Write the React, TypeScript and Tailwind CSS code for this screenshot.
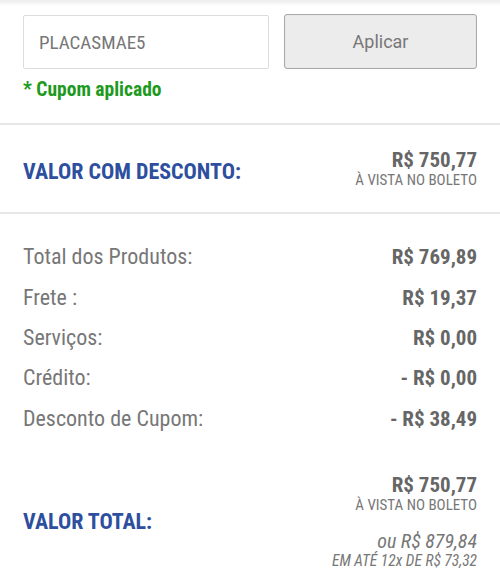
const rows = [
  { label: 'Total dos Produtos:', value: 'R$ 769,89' },
  { label: 'Frete :', value: 'R$ 19,37' },
  { label: 'Serviços:', value: 'R$ 0,00' },
  { label: 'Crédito:', value: '- R$ 0,00' },
  { label: 'Desconto de Cupom:', value: '- R$ 38,49' },
];

export default function App() {
  return (
    <div className="w-[500px] min-h-[586px] bg-white font-['Roboto',sans-serif] font-stretch-[75%]">
      {/* top shadow edge */}
      <div className="h-[6px] bg-gradient-to-b from-[#ececec] to-white" />

      {/* Coupon */}
      <div className="px-[23px] pt-[9px] pb-[19px]">
        <div className="flex gap-[15px]">
          <input
            className="w-[246px] h-[54px] border border-[#dcdcdc] rounded-[2px] px-[15px] text-[19px] text-[#777] outline-none font-stretch-[75%]"
            defaultValue="PLACASMAE5"
          />
          <button className="flex-1 h-[55px] -mt-px border-[1.5px] border-[#a8a8a8] rounded-[3px] bg-[#ececec] text-[18px] text-[#777] font-stretch-[100%] shadow-[inset_0_0_1px_#ccc]">
            Aplicar
          </button>
        </div>
        <p className="mt-[6px] text-[19.5px] font-bold text-[#1d9a1d]">* Cupom aplicado</p>
      </div>

      <div className="h-[2px] bg-[#e7e7e7]" />

      {/* Valor com desconto */}
      <div className="flex items-center justify-between h-[87px] px-[23px]">
        <span className="mt-[6px] text-[22px] font-bold text-[#2d4f9e]">VALOR COM DESCONTO:</span>
        <div className="text-right">
          <div className="text-[21px] font-bold text-[#666] leading-[24px]">R$ 750,77</div>
          <div className="text-[15px] text-[#777] leading-[17px]">À VISTA NO BOLETO</div>
        </div>
      </div>

      <div className="h-[2px] bg-[#e7e7e7]" />

      {/* Resumo */}
      <div className="px-[23px] pt-[29px]">
        {rows.map((r) => (
          <div key={r.label} className="flex items-baseline justify-between h-[40.4px] leading-[28px]">
            <span className="text-[22px] text-[#777]">{r.label}</span>
            <span className="text-[21px] font-bold text-[#666]">{r.value}</span>
          </div>
        ))}
      </div>

      {/* Valor total */}
      <div className="flex items-center justify-between px-[23px] pt-[28px]">
        <span className="text-[22px] font-bold text-[#2d4f9e]">VALOR TOTAL:</span>
        <div className="text-right">
          <div className="text-[21px] font-bold text-[#666] leading-[24px]">R$ 750,77</div>
          <div className="text-[15px] text-[#777] leading-[17px]">À VISTA NO BOLETO</div>
          <div className="mt-[15px] text-[20px] italic text-[#777] leading-[24px]">ou R$ 879,84</div>
          <div className="text-[15.5px] italic text-[#777] leading-[17px]">EM ATÉ 12x DE R$ 73,32</div>
        </div>
      </div>
    </div>
  );
}
